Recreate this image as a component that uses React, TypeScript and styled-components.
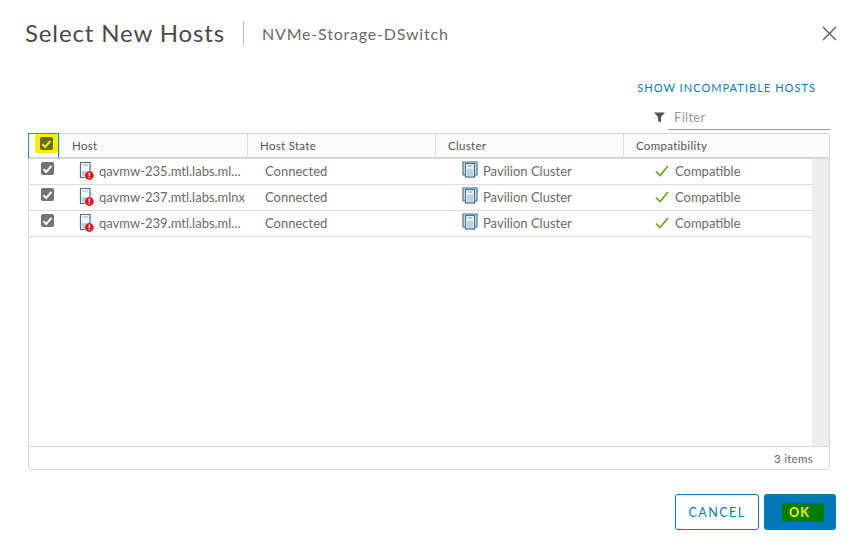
import React from "react";
import styled, { createGlobalStyle } from "styled-components";

const Global = createGlobalStyle`
  html, body { margin: 0; padding: 0; background: #fff; }
  body { font-family: "Lato", "Noto Sans", "Liberation Sans", sans-serif; color: #565656; }
`;

const Dialog = styled.div`
  width: 859px;
  height: 552px;
  box-sizing: border-box;
  padding: 18px 29px 22px 28px;
  display: flex;
  flex-direction: column;
  overflow: hidden;
`;

const Header = styled.header`
  display: flex;
  align-items: center;
  height: 30px;
  margin-left: -3px;
`;

const Title = styled.h1`
  margin: 0;
  font-size: 24px;
  font-weight: 400;
  letter-spacing: 0.87px;
  color: #4a4a4a;
  padding-right: 18px;
  border-right: 1px solid #bbb;
  line-height: 24px;
`;

const Subtitle = styled.span`
  margin-left: 18px;
  font-size: 16px;
  letter-spacing: 0.8px;
  color: #6a6a6a;
  flex: 1;
`;

const Close = styled.button`
  border: 0;
  background: none;
  padding: 0;
  width: 16px;
  height: 16px;
  margin-right: -7px;
  display: flex;
`;

const LinkRow = styled.div`
  display: flex;
  justify-content: flex-end;
  margin-top: 31px;
  height: 16px;
  align-items: center;
`;

const LinkButton = styled.a`
  font-size: 11px;
  letter-spacing: 1.05px;
  color: #0a7cb8;
  margin-right: 14px;
`;

const FilterRow = styled.div`
  display: flex;
  justify-content: flex-end;
  margin-top: 12px;
  height: 23px;
`;

const FilterField = styled.div`
  width: 162px;
  height: 100%;
  position: relative;
  border-bottom: 1px solid #9a9a9a;
  box-sizing: border-box;
  padding-left: 6px;
  font-size: 13px;
  letter-spacing: 0.3px;
  line-height: 20px;
  color: #9a9a9a;
`;

const FilterIcon = styled.svg`
  position: absolute;
  left: -14px;
  top: 5px;
`;

const Grid = styled.section`
  margin-top: 3px;
  height: 337px;
  flex: none;
  border: 1px solid #d7d7d7;
  border-radius: 3px;
  display: flex;
  flex-direction: column;
  box-sizing: border-box;
`;

const cols = "30px 188px 188px 188px 1fr";

const HeadRow = styled.div`
  display: grid;
  grid-template-columns: ${cols};
  height: 23px;
  background: #fafafa;
  border-bottom: 2px solid #d7d7d7;
  border-radius: 3px 3px 0 0;
`;

const HeadCell = styled.div`
  font-size: 11.5px;
  letter-spacing: 0.3px;
  color: #565656;
  display: flex;
  align-items: center;
  padding: 0 0 2px 12px;
  border-left: 1px solid #e0e0e0;
`;

const SelectAll = styled.div`
  position: relative;
  border: 1px solid #2e8cc4;
  border-bottom: 0;
  margin: -1px 0 0 -1px;
  height: 24px;
`;

const Highlight = styled.span`
  position: absolute;
  left: 6px;
  top: 0;
  width: 23px;
  height: 19px;
  background: #f2f200;
  border-radius: 2px;
  display: flex;
  align-items: center;
  justify-content: center;
`;

const Box = styled.span<{ $marked?: boolean }>`
  width: 13px;
  height: 13px;
  border-radius: 2px;
  background: ${(p) => (p.$marked ? "#6f6a00" : "#737373")};
  display: flex;
  align-items: center;
  justify-content: center;
`;

const Body = styled.div`
  flex: 1;
  display: flex;
  min-height: 0;
`;

const Rows = styled.div`
  flex: 1;
  min-width: 0;
`;

const Scrollbar = styled.div`
  width: 17px;
  background: #eeeeee;
`;

const Row = styled.div`
  display: grid;
  grid-template-columns: ${cols};
  height: 26px;
  box-sizing: border-box;
  border-bottom: 1px solid #dcdcdc;
`;

const CheckCell = styled.div`
  padding: 3px 0 0 12px;
`;

const Cell = styled.div<{ $indent: number }>`
  display: flex;
  align-items: flex-start;
  padding-left: ${(p) => p.$indent}px;
  padding-top: 4px;
  font-size: 13px;
  line-height: 16px;
  color: #6a6a6a;
  white-space: nowrap;
  min-width: 0;
`;

const RowIcon = styled.svg`
  flex: none;
  margin-top: -2px;
`;

const CompatSvg = styled.svg`
  flex: none;
  margin-top: 2px;
`;

const ClusterName = styled.span`
  margin-left: 5px;
`;

const CompatName = styled.span`
  margin-left: 6px;
`;

const GridFooter = styled.div`
  height: 23px;
  border-top: 1px solid #d7d7d7;
  box-sizing: border-box;
  display: flex;
  align-items: center;
  justify-content: flex-end;
  padding-right: 16px;
  font-size: 11.5px;
  letter-spacing: 0.3px;
  color: #666;
`;

const Actions = styled.footer`
  display: flex;
  justify-content: flex-end;
  gap: 5px;
  margin-top: 24px;
  margin-right: -6px;
`;

const Cancel = styled.button`
  width: 84px;
  height: 36px;
  border: 1px solid #0a7cb8;
  border-radius: 3px;
  background: #fff;
  color: #0a7cb8;
  font: 12.5px "Lato", sans-serif;
  letter-spacing: 1.45px;
`;

const Ok = styled.button`
  width: 72px;
  height: 36px;
  border: 0;
  border-radius: 3px;
  background: #0079b8;
  display: flex;
  align-items: center;
  justify-content: center;
  padding: 0 0 0 6px;
`;

const OkMark = styled.span`
  width: 42px;
  height: 19px;
  box-sizing: border-box;
  padding-left: 7px;
  background: #007c00;
  border-radius: 2px;
  color: #f4f400;
  font: 700 12.5px/19px "Lato", sans-serif;
  letter-spacing: 1.2px;
  text-align: left;
`;

const Tick = ({ color = "#fff" }: { color?: string }) => (
  <svg width="11" height="10" viewBox="0 0 11 10">
    <path d="M1.5 5.2 L4.2 8 L9.5 1.8" fill="none" stroke={color} strokeWidth="2" />
  </svg>
);

const HostIcon = () => (
  <RowIcon width="20" height="20" viewBox="0 0 20 20">
    <path d="M6 16.5 H1.5 V1.5 H11 V10" fill="none" stroke="#3f7391" strokeWidth="1.2" />
    <path d="M3.5 4 H9" stroke="#8aa9bb" strokeWidth="1" />
    <rect x="3" y="10" width="4.5" height="5.5" fill="#bcd0da" />
    <circle cx="10.3" cy="14.5" r="4.4" fill="#e8121d" />
    <rect x="9.6" y="11.5" width="1.5" height="3.6" fill="#fff" />
    <rect x="9.6" y="15.9" width="1.5" height="1.4" fill="#fff" />
  </RowIcon>
);

const ClusterIcon = () => (
  <RowIcon width="16" height="17" viewBox="0 0 16 17">
    <path d="M3 14 H1 V1 H15 V14 H13" fill="#dfeaf0" stroke="#3f7391" strokeWidth="1.2" />
    <rect x="3.5" y="2.5" width="9" height="13.5" fill="#fff" stroke="#3f7391" strokeWidth="1.3" />
    <path d="M5.5 5 H10.5" stroke="#5f8ca6" strokeWidth="1" />
    <rect x="5" y="7.5" width="6" height="7.5" fill="#bcd3de" />
  </RowIcon>
);

const CompatIcon = () => (
  <CompatSvg width="14" height="12" viewBox="0 0 14 12">
    <path d="M1 6.5 L5 10.5 L13 1" fill="none" stroke="#62a420" strokeWidth="1.6" />
  </CompatSvg>
);

const hosts = ["qavmw-235.mtl.labs.ml...", "qavmw-237.mtl.labs.mlnx", "qavmw-239.mtl.labs.ml..."];

export default function App() {
  return (
    <>
      <Global />
      <Dialog>
        <Header>
          <Title>Select New Hosts</Title>
          <Subtitle>NVMe-Storage-DSwitch</Subtitle>
          <Close aria-label="Close">
            <svg width="16" height="16" viewBox="0 0 16 16">
              <path d="M2 2 L15 15 M15 2 L2 15" stroke="#555" strokeWidth="1.2" />
            </svg>
          </Close>
        </Header>
        <LinkRow>
          <LinkButton>SHOW INCOMPATIBLE HOSTS</LinkButton>
        </LinkRow>
        <FilterRow>
          <FilterField>
            <FilterIcon width="11" height="11" viewBox="0 0 11 11">
              <path d="M0 0.5 H11 L7 5 V10.5 L4 9 V5 Z" fill="#555" />
            </FilterIcon>
            Filter
          </FilterField>
        </FilterRow>
        <Grid>
          <HeadRow>
            <SelectAll>
              <Highlight>
                <Box $marked>
                  <Tick color="#f2f200" />
                </Box>
              </Highlight>
            </SelectAll>
            <HeadCell>Host</HeadCell>
            <HeadCell>Host State</HeadCell>
            <HeadCell>Cluster</HeadCell>
            <HeadCell>Compatibility</HeadCell>
          </HeadRow>
          <Body>
            <Rows>
              {hosts.map((h) => (
                <Row key={h}>
                  <CheckCell>
                    <Box>
                      <Tick />
                    </Box>
                  </CheckCell>
                  <Cell $indent={20}>
                    <HostIcon />
                    {h}
                  </Cell>
                  <Cell $indent={18}>Connected</Cell>
                  <Cell $indent={27}>
                    <ClusterIcon />
                    <ClusterName>Pavilion Cluster</ClusterName>
                  </Cell>
                  <Cell $indent={32}>
                    <CompatIcon />
                    <CompatName>Compatible</CompatName>
                  </Cell>
                </Row>
              ))}
            </Rows>
            <Scrollbar />
          </Body>
          <GridFooter>3 items</GridFooter>
        </Grid>
        <Actions>
          <Cancel>CANCEL</Cancel>
          <Ok>
            <OkMark>OK</OkMark>
          </Ok>
        </Actions>
      </Dialog>
    </>
  );
}
